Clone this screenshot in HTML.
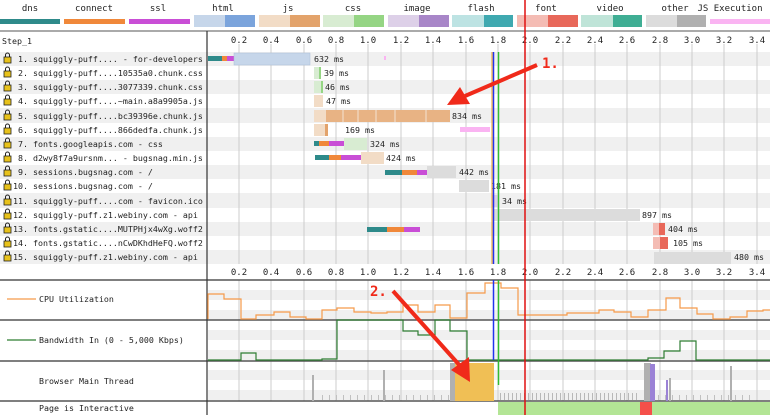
<!DOCTYPE html>
<html><head><meta charset="utf-8"><style>
body{margin:0;background:#fff;width:770px;height:415px;overflow:hidden}
svg{display:block}
text{font-family:"DejaVu Sans Mono","Liberation Mono",monospace;}
</style></head><body>
<svg width="770" height="415" viewBox="0 0 770 415" xmlns="http://www.w3.org/2000/svg">
<defs>
<pattern id="sp" x="0" y="0" width="4" height="10" patternUnits="userSpaceOnUse"><rect x="0" y="3" width="1" height="7" fill="#b8b8b8"/></pattern>
<pattern id="sp2" x="0" y="0" width="7" height="10" patternUnits="userSpaceOnUse"><rect x="0" y="5" width="1" height="5" fill="#c0c0c0"/></pattern>
</defs>
<g font-size="9" fill="#222" text-anchor="middle">
<text x="30" y="11">dns</text><text x="94" y="11">connect</text><text x="158" y="11">ssl</text>
<text x="223" y="11">html</text><text x="288" y="11">js</text><text x="353" y="11">css</text>
<text x="417" y="11">image</text><text x="481" y="11">flash</text><text x="546" y="11">font</text>
<text x="610" y="11">video</text><text x="675" y="11">other</text><text x="730" y="11">JS Execution</text>
</g>
<rect x="0" y="19" width="60" height="5" fill="#2e8a8a"/>
<rect x="64" y="19" width="61" height="5" fill="#f0883a"/>
<rect x="129" y="19" width="61" height="5" fill="#c94ed6"/>
<rect x="194" y="15" width="31" height="12" fill="#c6d6ea"/><rect x="225" y="15" width="30" height="12" fill="#7ba4dc"/>
<rect x="259" y="15" width="31" height="12" fill="#f2dcc6"/><rect x="290" y="15" width="30" height="12" fill="#e3a36b"/>
<rect x="323" y="15" width="31" height="12" fill="#d8ecd2"/><rect x="354" y="15" width="30" height="12" fill="#95d584"/>
<rect x="388" y="15" width="31" height="12" fill="#ddd0e8"/><rect x="419" y="15" width="30" height="12" fill="#a886c8"/>
<rect x="452" y="15" width="32" height="12" fill="#bde3e3"/><rect x="484" y="15" width="29" height="12" fill="#3fa9b0"/>
<rect x="517" y="15" width="31" height="12" fill="#f4bcb4"/><rect x="548" y="15" width="30" height="12" fill="#e8685a"/>
<rect x="581" y="15" width="32" height="12" fill="#bfe4d8"/><rect x="613" y="15" width="29" height="12" fill="#3fae94"/>
<rect x="646" y="15" width="31" height="12" fill="#dcdcdc"/><rect x="677" y="15" width="29" height="12" fill="#b0b0b0"/>
<rect x="710" y="19" width="60" height="5" fill="#fab4f2"/>
<line x1="0" y1="31" x2="770" y2="31" stroke="#555" stroke-width="1"/>
<g fill="#f0f0f0">
<rect x="0" y="52" width="770" height="14"/><rect x="0" y="80" width="770" height="14"/>
<rect x="0" y="108" width="770" height="15"/><rect x="0" y="137" width="770" height="14"/>
<rect x="0" y="165" width="770" height="14"/><rect x="0" y="193" width="770" height="15"/>
<rect x="0" y="222" width="770" height="14"/><rect x="0" y="250" width="770" height="14"/>
</g>
<g stroke="#ccc" stroke-width="1">
<line x1="239" y1="44" x2="239" y2="264"/><line x1="271" y1="44" x2="271" y2="264"/><line x1="304" y1="44" x2="304" y2="264"/><line x1="336" y1="44" x2="336" y2="264"/><line x1="368" y1="44" x2="368" y2="264"/><line x1="401" y1="44" x2="401" y2="264"/><line x1="433" y1="44" x2="433" y2="264"/><line x1="466" y1="44" x2="466" y2="264"/><line x1="498" y1="44" x2="498" y2="264"/><line x1="530" y1="44" x2="530" y2="264"/><line x1="563" y1="44" x2="563" y2="264"/><line x1="595" y1="44" x2="595" y2="264"/><line x1="627" y1="44" x2="627" y2="264"/><line x1="660" y1="44" x2="660" y2="264"/><line x1="692" y1="44" x2="692" y2="264"/><line x1="724" y1="44" x2="724" y2="264"/><line x1="757" y1="44" x2="757" y2="264"/>
</g>
<g fill="#f0f0f0">
<rect x="208" y="290" width="562" height="10"/><rect x="208" y="310" width="562" height="10"/>
<rect x="208" y="330" width="562" height="10"/><rect x="208" y="350" width="562" height="10"/>
<rect x="208" y="370" width="562" height="10"/><rect x="208" y="390" width="562" height="10"/>
</g>
<g stroke="#ccc" stroke-width="1">
<line x1="239" y1="280" x2="239" y2="401"/><line x1="271" y1="280" x2="271" y2="401"/><line x1="304" y1="280" x2="304" y2="401"/><line x1="336" y1="280" x2="336" y2="401"/><line x1="368" y1="280" x2="368" y2="401"/><line x1="401" y1="280" x2="401" y2="401"/><line x1="433" y1="280" x2="433" y2="401"/><line x1="466" y1="280" x2="466" y2="401"/><line x1="498" y1="280" x2="498" y2="401"/><line x1="530" y1="280" x2="530" y2="401"/><line x1="563" y1="280" x2="563" y2="401"/><line x1="595" y1="280" x2="595" y2="401"/><line x1="627" y1="280" x2="627" y2="401"/><line x1="660" y1="280" x2="660" y2="401"/><line x1="692" y1="280" x2="692" y2="401"/><line x1="724" y1="280" x2="724" y2="401"/><line x1="757" y1="280" x2="757" y2="401"/>
</g>
<g font-size="9" fill="#222" text-anchor="middle">
<text x="239" y="43">0.2</text><text x="271" y="43">0.4</text><text x="304" y="43">0.6</text><text x="336" y="43">0.8</text><text x="368" y="43">1.0</text><text x="401" y="43">1.2</text><text x="433" y="43">1.4</text><text x="466" y="43">1.6</text><text x="498" y="43">1.8</text><text x="530" y="43">2.0</text><text x="563" y="43">2.2</text><text x="595" y="43">2.4</text><text x="627" y="43">2.6</text><text x="660" y="43">2.8</text><text x="692" y="43">3.0</text><text x="724" y="43">3.2</text><text x="757" y="43">3.4</text>
<text x="239" y="275">0.2</text><text x="271" y="275">0.4</text><text x="304" y="275">0.6</text><text x="336" y="275">0.8</text><text x="368" y="275">1.0</text><text x="401" y="275">1.2</text><text x="433" y="275">1.4</text><text x="466" y="275">1.6</text><text x="498" y="275">1.8</text><text x="530" y="275">2.0</text><text x="563" y="275">2.2</text><text x="595" y="275">2.4</text><text x="627" y="275">2.6</text><text x="660" y="275">2.8</text><text x="692" y="275">3.0</text><text x="724" y="275">3.2</text><text x="757" y="275">3.4</text>
</g>
<g font-size="8.3" fill="#222">
<text x="2" y="44">Step_1</text>
<text x="18" y="62">1. squiggly-puff.... - for-developers</text>
<text x="18" y="76">2. squiggly-puff....10535a0.chunk.css</text>
<text x="18" y="90">3. squiggly-puff....3077339.chunk.css</text>
<text x="18" y="104">4. squiggly-puff....~main.a8a9905a.js</text>
<text x="18" y="119">5. squiggly-puff....bc39396e.chunk.js</text>
<text x="18" y="133">6. squiggly-puff....866dedfa.chunk.js</text>
<text x="18" y="147">7. fonts.googleapis.com - css</text>
<text x="18" y="161">8. d2wy8f7a9ursnm... - bugsnag.min.js</text>
<text x="18" y="175">9. sessions.bugsnag.com - /</text>
<text x="13" y="189">10. sessions.bugsnag.com - /</text>
<text x="13" y="204">11. squiggly-puff....com - favicon.ico</text>
<text x="13" y="218">12. squiggly-puff.z1.webiny.com - api</text>
<text x="13" y="232">13. fonts.gstatic....MUTPHjx4wXg.woff2</text>
<text x="13" y="246">14. fonts.gstatic....nCwDKhdHeFQ.woff2</text>
<text x="13" y="260">15. squiggly-puff.z1.webiny.com - api</text>
</g>
<g fill="#e8c21a" stroke="#222" stroke-width=".8">
<rect x="4" y="57" width="7" height="6"/><rect x="4" y="71" width="7" height="6"/><rect x="4" y="85" width="7" height="6"/><rect x="4" y="99" width="7" height="6"/><rect x="4" y="114" width="7" height="6"/><rect x="4" y="128" width="7" height="6"/><rect x="4" y="142" width="7" height="6"/><rect x="4" y="156" width="7" height="6"/><rect x="4" y="170" width="7" height="6"/><rect x="4" y="184" width="7" height="6"/><rect x="4" y="199" width="7" height="6"/><rect x="4" y="213" width="7" height="6"/><rect x="4" y="227" width="7" height="6"/><rect x="4" y="241" width="7" height="6"/><rect x="4" y="255" width="7" height="6"/>
</g>
<g fill="none" stroke="#222" stroke-width="1">
<path d="M5.5 57v-2a2 2 0 0 1 4 0v2"/><path d="M5.5 71v-2a2 2 0 0 1 4 0v2"/><path d="M5.5 85v-2a2 2 0 0 1 4 0v2"/><path d="M5.5 99v-2a2 2 0 0 1 4 0v2"/><path d="M5.5 114v-2a2 2 0 0 1 4 0v2"/><path d="M5.5 128v-2a2 2 0 0 1 4 0v2"/><path d="M5.5 142v-2a2 2 0 0 1 4 0v2"/><path d="M5.5 156v-2a2 2 0 0 1 4 0v2"/><path d="M5.5 170v-2a2 2 0 0 1 4 0v2"/><path d="M5.5 184v-2a2 2 0 0 1 4 0v2"/><path d="M5.5 199v-2a2 2 0 0 1 4 0v2"/><path d="M5.5 213v-2a2 2 0 0 1 4 0v2"/><path d="M5.5 227v-2a2 2 0 0 1 4 0v2"/><path d="M5.5 241v-2a2 2 0 0 1 4 0v2"/><path d="M5.5 255v-2a2 2 0 0 1 4 0v2"/>
</g>
<g>
<rect x="208" y="56" width="14" height="5" fill="#2e8a8a"/><rect x="222" y="56" width="5" height="5" fill="#f0883a"/><rect x="227" y="56" width="7" height="5" fill="#c94ed6"/>
<rect x="234" y="53" width="76" height="12" fill="#c6d6ea" stroke="#aabcd6" stroke-width=".5"/>
<rect x="314" y="67" width="6" height="12" fill="#d8ecd2"/><rect x="319" y="67" width="2" height="12" fill="#95d584"/>
<rect x="314" y="81" width="8" height="12" fill="#d8ecd2"/><rect x="321" y="81" width="2" height="12" fill="#95d584"/>
<rect x="314" y="95" width="9" height="12" fill="#f2dcc6"/>
<rect x="314" y="110" width="12" height="12" fill="#f2dcc6"/><rect x="326" y="110" width="124" height="12" fill="#e8b384"/>
<g stroke="#f5e3d2" stroke-width="1"><line x1="343" y1="110" x2="343" y2="122"/><line x1="358" y1="110" x2="358" y2="122"/><line x1="376" y1="110" x2="376" y2="122"/><line x1="395" y1="110" x2="395" y2="122"/><line x1="426" y1="110" x2="426" y2="122"/></g>
<rect x="314" y="124" width="12" height="12" fill="#f2dcc6"/><rect x="325" y="124" width="3" height="12" fill="#e3a36b"/>
<rect x="314" y="141" width="5" height="5" fill="#2e8a8a"/><rect x="319" y="141" width="10" height="5" fill="#f0883a"/><rect x="329" y="141" width="15" height="5" fill="#c94ed6"/>
<rect x="344" y="138" width="23" height="12" fill="#d8ecd2"/>
<rect x="315" y="155" width="14" height="5" fill="#2e8a8a"/><rect x="329" y="155" width="12" height="5" fill="#f0883a"/><rect x="341" y="155" width="20" height="5" fill="#c94ed6"/>
<rect x="361" y="152" width="23" height="12" fill="#f2dcc6"/>
<rect x="385" y="170" width="17" height="5" fill="#2e8a8a"/><rect x="402" y="170" width="15" height="5" fill="#f0883a"/><rect x="417" y="170" width="10" height="5" fill="#c94ed6"/>
<rect x="427" y="166" width="29" height="12" fill="#dcdcdc"/>
<rect x="459" y="180" width="30" height="12" fill="#dcdcdc"/>
<rect x="492" y="195" width="7" height="12" fill="#ddd0e8"/>
<rect x="494" y="209" width="146" height="12" fill="#dcdcdc"/>
<rect x="367" y="227" width="20" height="5" fill="#2e8a8a"/><rect x="387" y="227" width="17" height="5" fill="#f0883a"/><rect x="404" y="227" width="16" height="5" fill="#c94ed6"/>
<rect x="653" y="223" width="7" height="12" fill="#f4bcb4"/><rect x="659" y="223" width="6" height="12" fill="#e8685a"/>
<rect x="653" y="237" width="8" height="12" fill="#f4bcb4"/><rect x="660" y="237" width="8" height="12" fill="#e8685a"/>
<rect x="654" y="252" width="77" height="12" fill="#dcdcdc"/>
<rect x="460" y="127" width="30" height="5" fill="#fab4f2"/>
<rect x="384" y="56" width="2" height="4" fill="#fab4f2"/>
</g>
<g font-size="8.3" fill="#222">
<text x="314" y="62">632 ms</text><text x="324" y="76">39 ms</text><text x="325" y="90">46 ms</text><text x="326" y="104">47 ms</text><text x="452" y="119">834 ms</text><text x="345" y="133">169 ms</text><text x="370" y="147">324 ms</text><text x="386" y="161">424 ms</text><text x="459" y="175">442 ms</text><text x="491" y="189">181 ms</text><text x="502" y="204">34 ms</text><text x="642" y="218">897 ms</text><text x="668" y="232">404 ms</text><text x="673" y="246">105 ms</text><text x="734" y="260">480 ms</text>
</g>
<g stroke="#555" stroke-width="1.5">
<line x1="0" y1="280" x2="770" y2="280"/><line x1="0" y1="320" x2="770" y2="320"/><line x1="0" y1="361" x2="770" y2="361"/><line x1="0" y1="401" x2="770" y2="401"/>
</g>
<line x1="207" y1="31" x2="207" y2="415" stroke="#333" stroke-width="1.2"/>
<polyline fill="none" stroke="#f59a4a" stroke-width="1.2" points="208,319 208,294 224,294 224,299 241,299 241,319 256,319 256,315 274,315 274,312 290,312 290,317 306,317 306,319 322,319 322,310 337,310 337,308 354,308 354,312 371,312 371,313 387,313 387,312 403,312 403,305 418,305 418,312 435,312 435,305 450,305 450,318 467,318 467,293 485,293 485,283 501,283 501,288 518,288 518,315 567,315 567,313 599,313 599,310 614,310 614,312 631,312 631,317 648,317 648,310 666,310 666,298 680,298 680,308 697,308 697,314 713,314 713,319 730,319 730,317 747,317 747,311 763,311 763,310 770,310"/>
<polyline fill="none" stroke="#2e7d32" stroke-width="1.2" points="208,360 241,360 241,353 256,353 256,360 322,360 322,359 337,359 337,320 403,320 403,331 418,331 418,335 435,335 435,320 450,320 450,331 467,331 467,360 648,360 648,358 664,358 664,351 680,351 680,341 696,341 696,360 770,360"/>
<rect x="500" y="391" width="140" height="10" fill="url(#sp)"/>
<rect x="320" y="391" width="130" height="10" fill="url(#sp2)"/>
<rect x="655" y="391" width="100" height="10" fill="url(#sp2)"/>
<rect x="450" y="363" width="6" height="38" fill="#b0b0b0"/>
<rect x="455" y="363" width="39" height="38" fill="#f0bf55"/>
<g fill="#b0b0b0">
<rect x="312" y="375" width="2" height="26"/><rect x="383" y="370" width="2" height="31"/><rect x="644" y="363" width="7" height="38" /><rect x="730" y="366" width="2" height="35"/><rect x="669" y="378" width="2" height="23"/>
</g>
<rect x="650" y="364" width="5" height="37" fill="#9b82d6"/>
<rect x="666" y="380" width="2" height="21" fill="#9b82d6"/>
<rect x="498" y="402" width="272" height="13" fill="#b3e595"/>
<rect x="640" y="402" width="12" height="13" fill="#f5504a"/>
<g font-size="8.3" fill="#222">
<text x="39" y="302">CPU Utilization</text>
<text x="39" y="343">Bandwidth In (0 - 5,000 Kbps)</text>
<text x="39" y="384">Browser Main Thread</text>
<text x="39" y="411">Page is Interactive</text>
</g>
<line x1="7" y1="299" x2="36" y2="299" stroke="#f59a4a" stroke-width="1.2"/>
<line x1="7" y1="340" x2="36" y2="340" stroke="#2e7d32" stroke-width="1.2"/>
<line x1="492" y1="52" x2="492" y2="264" stroke="#f0a020" stroke-width="1"/>
<line x1="493.5" y1="52" x2="493.5" y2="264" stroke="#2233ee" stroke-width="1.5"/>
<line x1="498.5" y1="52" x2="498.5" y2="264" stroke="#33bb33" stroke-width="1.5"/>
<line x1="493.5" y1="280" x2="493.5" y2="360" stroke="#2233ee" stroke-width="1.5"/>
<line x1="498.5" y1="280" x2="498.5" y2="385" stroke="#33bb33" stroke-width="1.5"/>
<line x1="525" y1="0" x2="525" y2="415" stroke="#e01010" stroke-width="1.5"/>
<g stroke="#f02a1a" stroke-width="4" fill="#f02a1a">
<line x1="537" y1="65" x2="465" y2="96"/>
<line x1="393" y1="291" x2="462" y2="368"/>
</g>
<polygon points="447,105 460,87 470,104" fill="#f02a1a"/>
<polygon points="470,382 451,370 469,357" fill="#f02a1a"/>
<g font-weight="bold" font-size="14" fill="#f02a1a">
<text x="542" y="68" font-family="Liberation Sans,sans-serif">1.</text>
<text x="370" y="296" font-family="Liberation Sans,sans-serif">2.</text>
</g>
</svg>
</body></html>
